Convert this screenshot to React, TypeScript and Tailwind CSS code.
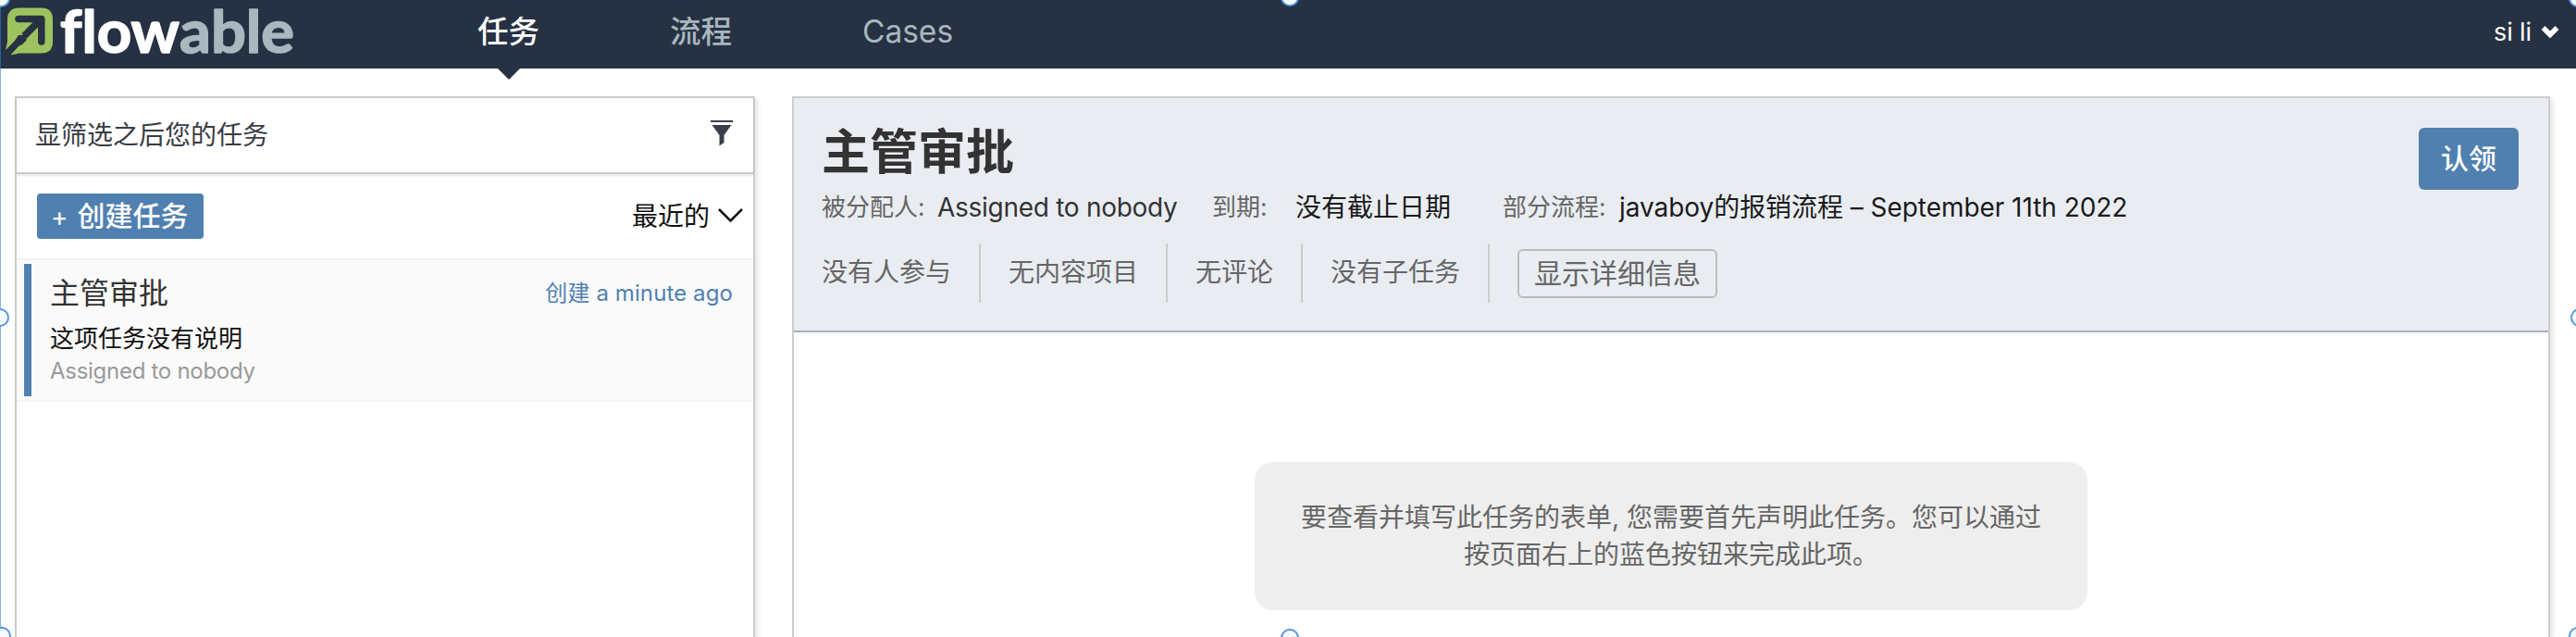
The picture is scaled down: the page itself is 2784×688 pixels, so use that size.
import React from "react";

const FONT = "font-['Inter','Noto_Sans_CJK_SC',sans-serif]";

function Logo() {
  return (
    <svg className="block" width="330" height="74" viewBox="0 0 330 74">
      <path d="M21 8.5H44.500Q57 8.500 57 21V45Q57 57.500 44.500 57.500H21L11.500 59.500L6 54L8 45V21Q8 8.500 21 8.500Z" fill="#9dc35f" />
      <path d="M20 20.500H44.800V45" fill="none" stroke="#263243" strokeWidth="7.500" strokeLinecap="round" strokeLinejoin="round" />
      <path d="M44 21L26 39" stroke="#263243" strokeWidth="7.500" />
      <path d="M20 38L26 38L29 43L24 48L20 50L11 60L5 55L16 44Z" fill="#263243" />
      <g className="[font-variant-ligatures:none]" fontSize="64" fontWeight="700" fontFamily="Lato, sans-serif" strokeWidth="1.6" strokeLinejoin="round">
        <text x="65" y="56.500" fill="#ffffff" stroke="#ffffff" textLength="129" lengthAdjust="spacingAndGlyphs">flow</text>
        <text x="194" y="56.500" fill="#aab7be" stroke="#aab7be" textLength="124" lengthAdjust="spacingAndGlyphs">able</text>
      </g>
    </svg>
  );
}

function Header() {
  return (
    <header className="flex h-[74px] shrink-0 bg-[#263243] text-[33.5px] leading-[68px] text-[#a9b6bf]">
      <div className="w-[446px]"><Logo /></div>
      <nav className="flex">
        <div className="relative w-[207px] text-center font-medium text-white">
          任务
          <svg className="absolute left-[91px] top-[73px]" width="26" height="14" viewBox="0 0 26 14">
            <path d="M0 0H26L13 13Z" fill="#263243" />
          </svg>
        </div>
        <div className="w-[209px] text-center font-medium">流程</div>
        <div className="w-[238px] text-center">Cases</div>
      </nav>
      <div className="ml-auto flex items-center gap-[10px] pr-[18px] pb-[6px] text-[27px] leading-none text-white">
        <span className="tracking-[-0.1px]">si li</span>
        <svg width="20" height="14" viewBox="0 0 20 14">
          <path d="M2.500 3L10 10.500L17.500 3" fill="none" stroke="#fff" strokeWidth="5.500" />
        </svg>
      </div>
    </header>
  );
}

function TaskList() {
  return (
    <section className="flex w-[800px] shrink-0 flex-col border-2 border-b-0 border-[#ccc] bg-white shadow-[3px_3px_5px_rgba(0,0,0,0.1)]">
      <div className="flex h-[82px] shrink-0 items-center justify-between border-b-2 border-[#ccc] pl-[20px] pr-[22px] text-[28px] leading-none text-[#393c44] shadow-[0_2px_3px_rgba(0,0,0,0.1)]">
        <span>显筛选之后您的任务</span>
        <svg className="mb-[5px]" width="24" height="28" viewBox="0 0 24 28">
          <path d="M0 0H24V2H0ZM1.500 5H22.500L14.500 16V24L9.500 27.500V16Z" fill="#393f4a" />
        </svg>
      </div>
      <div className="flex h-[93px] shrink-0 items-center justify-between border-b-2 border-[#f2f2f2] pl-[22px] pr-[11px]">
        <button className="flex h-[49px] w-[180px] items-center gap-[10px] rounded-[4px] bg-[#5080b0] pb-[2px] pl-[15px] text-[30px] font-medium leading-none text-white">
          <span className="pt-[2px] text-[28px] font-normal">+</span>
          <span>创建任务</span>
        </button>
        <div className="flex items-center gap-[9px] text-[28px] leading-none text-[#111]">
          <span>最近的</span>
          <svg className="mb-[3px]" width="27" height="17" viewBox="0 0 27 17">
            <path d="M1 2L13.500 14.500L26 2" fill="none" stroke="#111" strokeWidth="2.500" />
          </svg>
        </div>
      </div>
      <div className="flex h-[153px] shrink-0 border-b-2 border-[#f5f5f5] bg-[#fafafa] py-[4px] pl-[8px] pr-[22px]">
        <div className="h-[143px] w-[8px] bg-[#5080b0]" />
        <div className="flex flex-1 flex-col pl-[20px]">
          <div className="mt-[11px] flex h-[42px] items-center justify-between leading-none">
            <span className="text-[32px] text-[#333]">主管审批</span>
            <span className="text-[24px] tracking-[0.1px] text-[#5080b0]">创建 a minute ago</span>
          </div>
          <div className="mt-[10px] h-[36px] text-[26px] leading-[36px] text-[#111]">这项任务没有说明</div>
          <div className="h-[34px] text-[24px] leading-[34px] tracking-[-0.28px] text-[#999]">Assigned to nobody</div>
        </div>
      </div>
    </section>
  );
}

function Facts() {
  return (
    <div className="flex h-[40px] items-center whitespace-nowrap text-[28px] leading-none text-[#1a1a1a]">
      <span className="w-[125px] text-[26px] text-[#666]">被分配人:</span>
      <span className="w-[297px] tracking-[-0.28px] text-[#333]">Assigned to nobody</span>
      <span className="w-[90px] text-[26px] text-[#666]">到期:</span>
      <span className="w-[224px]">没有截止日期</span>
      <span className="w-[126px] text-[26px] text-[#666]">部分流程:</span>
      <span className="tracking-[-0.05px]">javaboy的报销流程 – September 11th 2022</span>
    </div>
  );
}

function Summary() {
  return (
    <div className="flex h-[64px] text-[28px] leading-[62px] text-[#666]">
      <div className="w-[172px] border-r-2 border-[#ccc]">没有人参与</div>
      <div className="w-[202px] border-r-2 border-[#ccc] pl-[30px]">无内容项目</div>
      <div className="w-[146px] border-r-2 border-[#ccc] pl-[30px]">无评论</div>
      <div className="w-[202px] border-r-2 border-[#ccc] pl-[30px]">没有子任务</div>
      <button className="ml-[30px] mt-[6px] flex h-[53px] w-[216px] items-center justify-center rounded-[6px] border-2 border-[#bbb] pb-[1px] text-[30px] leading-none">
        显示详细信息
      </button>
    </div>
  );
}

function Detail() {
  return (
    <section className="flex w-[1900px] shrink-0 flex-col border-2 border-b-0 border-[#ccc] bg-white shadow-[3px_3px_5px_rgba(0,0,0,0.1)]">
      <div className="flex h-[253px] shrink-0 justify-between border-b-2 border-[#a9b0ba] bg-[#e9edf2] pl-[30px] pr-[32px]">
        <div>
          <h1 className="mt-[29px] h-[60px] text-[52px] font-bold leading-[60px] text-[#333]">主管审批</h1>
          <div className="mt-[9px]"><Facts /></div>
          <div className="mt-[19px]"><Summary /></div>
        </div>
        <button className="mt-[32px] flex h-[67px] w-[108px] items-center justify-center rounded-[6px] bg-[#5080b0] pb-[2px] text-[30px] font-medium leading-none text-white">
          认领
        </button>
      </div>
      <div className="mx-auto mt-[140px] h-[160px] w-[900px] rounded-[20px] bg-[#eee] pt-[40px] text-center text-[28px] leading-[40px] text-[#666]">
        <p>要查看并填写此任务的表单, 您需要首先声明此任务。您可以通过</p>
        <p>按页面右上的蓝色按钮来完成此项。</p>
      </div>
    </section>
  );
}

function Handle({ className }: { className: string }) {
  return <i className={`absolute size-[20px] rounded-full border-2 border-[#5596de] bg-[#f5faff] ${className}`} />;
}

export default function App() {
  return (
    <div className={`relative flex h-[688px] w-[2784px] flex-col overflow-hidden bg-white ${FONT}`}>
      <Header />
      <main className="flex flex-1 gap-[40px] pl-[16px] pt-[30px]">
        <TaskList />
        <Detail />
      </main>
      <div className="absolute left-0 top-0 h-[688px] w-px bg-[#2f7fd6]/60" />
      <Handle className="left-[-9px] top-[-12px]" />
      <Handle className="left-[1384px] top-[-13px]" />
      <Handle className="left-[2776px] top-[-12px]" />
      <Handle className="left-[-10px] top-[333px]" />
      <Handle className="left-[2778px] top-[333px]" />
      <Handle className="left-[-8px] top-[677px]" />
      <Handle className="left-[1384px] top-[679px]" />
      <Handle className="left-[2776px] top-[677px]" />
    </div>
  );
}
